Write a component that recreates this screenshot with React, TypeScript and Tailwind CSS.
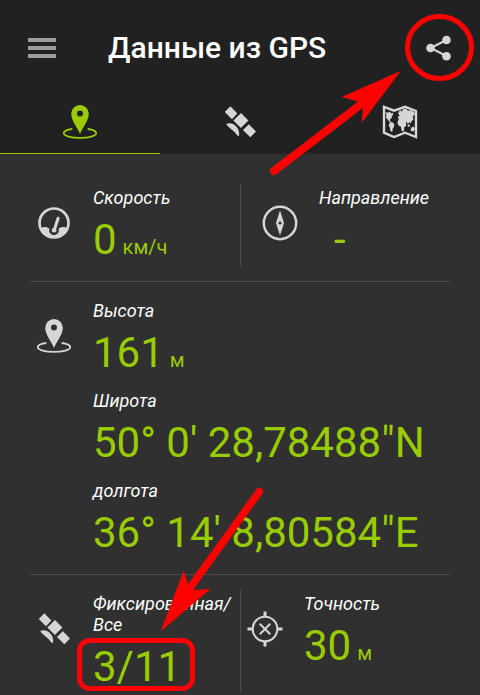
import React, { useState } from 'react';
import clsx from 'clsx';

interface IconProps {
  className?: string;
}

const PinIcon: React.FC<IconProps> = ({ className }) => (
  <svg viewBox="0 0 36 36" className={clsx('w-9 h-9 shrink-0', className)} fill="currentColor" aria-hidden="true">
    <path
      fillRule="evenodd"
      d="M18 1a8.8 8.8 0 0 0-8.8 8.8C9.2 16.500 15 23 18 30c3-7 8.800-13.500 8.800-20.200A8.800 8.800 0 0 0 18 1zm0 5.500a3 3 0 1 1 0 6 3 3 0 0 1 0-6z"
    />
    <path
      d="M10.300 25C4.600 25.800 1.800 27.300 1.800 29.200c0 2.600 7.200 4.700 16.200 4.700s16.200-2.100 16.200-4.700c0-1.900-2.800-3.400-8.500-4.200"
      fill="none"
      stroke="currentColor"
      strokeWidth="1.800"
    />
  </svg>
);

const SatelliteIcon: React.FC<IconProps> = ({ className }) => (
  <svg viewBox="0 0 36 36" className={clsx('w-9 h-9 shrink-0', className)} fill="currentColor" aria-hidden="true">
    <path d="M8.300 2.300 15.300 9.400 10 15.200 2.800 8z" />
    <path d="M19 9.100 26.400 16.600 18.900 23.900 11.400 16.500z" />
    <path d="M26.900 20.200 34 27.600 28.300 33.200 21 25.900z" />
    <path d="M4.100 20C10.500 16.600 18.800 23.800 17 32L15.300 31.600C13.300 27.600 8.300 25.500 4.100 20z" />
  </svg>
);

const MapIcon: React.FC<IconProps> = ({ className }) => (
  <svg viewBox="0 0 36 36" className={clsx('w-9 h-9 shrink-0', className)} fill="currentColor" aria-hidden="true">
    <path
      d="M2 2.800 12 6.700 23 2.800 34 7v26L23 28.700 12 33 2 28.700z"
      fill="none"
      stroke="currentColor"
      strokeWidth="2.400"
    />
    <path d="M3.500 8 6 8.700l1.500-1L9.500 9.500 11.200 8.500 10.600 11.800 9.600 12.500 9.900 14 8.400 14.800 7.800 16.500 9.500 18.200 7 17.500 5.200 14.800 4 13.500 4.500 11z" />
    <path d="M7.800 18.600 10 18 12.300 20.200 11.900 23.200 10.700 24.500 10.300 28 8.300 27 8 23.700 6.700 21.500z" />
    <path d="M16 9.500 18 6 19.500 7.500 21.500 5 24 4.700 26 6.700 28.500 6.200 32.500 8.200 32.800 11 30.700 12 31.500 15.200 29.600 17.200 28.700 19.500 27.200 18 26 20.500 24.700 17.700 24 18.800 24.300 21.500 22.400 23.200 21.800 27.500 19.800 27 18.800 22.500 16.500 21.500 15.300 18.500 16.800 15.300 15.800 13 17.800 11.500z" />
    <path d="M25.300 21.600 27 20.300 28.300 22 26.300 22.900z" />
    <path d="M29.300 23.500 31.700 22.600 33 24.800 31.500 27.500 28.500 26.700z" />
  </svg>
);

const SpeedIcon: React.FC<IconProps> = ({ className }) => (
  <svg viewBox="0 0 36 36" className={clsx('w-9 h-9 shrink-0', className)} aria-hidden="true">
    <circle cx="18" cy="18" r="14.500" fill="none" stroke="currentColor" strokeWidth="2.700" />
    <path
      d="M4.500 23C8 21.500 11 21.700 13.400 23.600A4.900 4.900 0 1 0 22.600 23.600C25 21.700 28 21.500 31.500 23A14.500 14.500 0 0 1 4.500 23z"
      fill="currentColor"
    />
    <path d="M22.100 13.200 18.200 25.300" fill="none" stroke="currentColor" strokeWidth="3" strokeLinecap="round" />
    <circle cx="18.100" cy="25.300" r="2.300" fill="currentColor" />
  </svg>
);

const CompassIcon: React.FC<IconProps> = ({ className }) => (
  <svg viewBox="0 0 36 36" className={clsx('w-9 h-9 shrink-0', className)} aria-hidden="true">
    <circle cx="18" cy="18" r="16.200" fill="none" stroke="currentColor" strokeWidth="2.500" />
    <path
      fill="currentColor"
      fillRule="evenodd"
      d="M18 5.500 22 18 18 30.500 14 18zM18 16.400a1.600 1.600 0 1 0 0 3.200 1.600 1.600 0 0 0 0-3.200z"
    />
  </svg>
);

const AccuracyIcon: React.FC<IconProps> = ({ className }) => (
  <svg
    viewBox="0 0 36 36"
    className={clsx('w-9 h-9 shrink-0', className)}
    fill="none"
    stroke="currentColor"
    aria-hidden="true"
  >
    <circle cx="18" cy="18" r="12.300" strokeWidth="2" />
    <path d="M18 .5v5M18 30.500v5M.5 18h5M30.500 18h5" strokeWidth="3" />
    <path d="M12.800 12.800 23.200 23.200M23.200 12.800 12.800 23.200" strokeWidth="2" />
  </svg>
);

const ShareIcon: React.FC = () => (
  <svg viewBox="0 0 26 26" className="w-[26px] h-[26px]" fill="currentColor" aria-hidden="true">
    <path d="M20.500 5 4.500 13 20.500 21" fill="none" stroke="currentColor" strokeWidth="2" />
    <circle cx="20.500" cy="5" r="4.300" />
    <circle cx="4.500" cy="13" r="4.300" />
    <circle cx="20.500" cy="21.300" r="4.300" />
  </svg>
);

interface ReadingProps {
  label: string;
  value: string;
  unit?: string;
  indent?: boolean;
}

const Reading: React.FC<ReadingProps> = ({ label, value, unit, indent }) => (
  <div>
    <dt className="text-[18px] leading-[21px] italic text-white">{label}</dt>
    <dd className={clsx('mt-[7px] text-[42px] leading-[49px] text-[#99cc00] whitespace-nowrap', indent && 'pl-[15px]')}>
      {value}
      {unit && <span className="ml-[6px] text-[20px] leading-none">{unit}</span>}
    </dd>
  </div>
);

interface BlockProps {
  icon: React.ReactNode;
  className?: string;
  children: React.ReactNode;
}

const Block: React.FC<BlockProps> = ({ icon, className, children }) => (
  <div className={clsx('flex', className)}>
    <div className="w-12 mt-[18px] mr-[15px] shrink-0 flex justify-center items-start text-[#d6d6d6]">{icon}</div>
    <dl className="flex-1 min-w-0 flex flex-col gap-[13px]">{children}</dl>
  </div>
);

const tabs = [
  { id: 'position', label: 'Позиция', Icon: PinIcon },
  { id: 'satellites', label: 'Спутники', Icon: SatelliteIcon },
  { id: 'map', label: 'Карта', Icon: MapIcon },
];

// Red marks over the screen: share button and fixed satellites
const Annotations: React.FC = () => (
  <svg
    width="480"
    height="695"
    viewBox="0 0 480 695"
    className="absolute top-0 left-0 pointer-events-none"
    fill="none"
    stroke="#ff0000"
    aria-hidden="true"
  >
    <ellipse cx="439.500" cy="47.500" rx="32" ry="31" strokeWidth="5" />
    <path d="M274 171 364 102" strokeWidth="8" strokeLinecap="round" />
    <path d="M401 70.700 341.700 97 358 101.500 363 107 361.700 122.700z" fill="#ff0000" stroke="none" />
    <path d="M259.300 491.500 187 592" strokeWidth="7.500" strokeLinecap="round" />
    <path d="M160.700 631.300 183.700 570.700 188.500 586 195 590 210.700 588.700z" fill="#ff0000" stroke="none" />
    <rect x="79.500" y="640.500" width="113" height="48" rx="10" strokeWidth="5" />
  </svg>
);

const App: React.FC = () => {
  const [activeTab, setActiveTab] = useState('position');

  return (
    <div className="relative min-h-screen bg-[#303030] font-['Roboto',sans-serif] overflow-x-hidden">
      <header className="bg-[#212121]">
        <div className="h-24 px-7 flex items-center">
          <button type="button" aria-label="Меню" className="w-7 h-5 flex flex-col justify-between">
            <span className="block w-full h-1 bg-[#9c9c9c]" />
            <span className="block w-full h-1 bg-[#9c9c9c]" />
            <span className="block w-full h-1 bg-[#9c9c9c]" />
          </button>
          <h1 className="ml-13 flex-1 text-[30px] leading-9 font-medium text-white whitespace-nowrap">
            Данные из GPS
          </h1>
          <button type="button" aria-label="Поделиться" className="text-[#d6d6d6]">
            <ShareIcon />
          </button>
        </div>
        <nav className="grid grid-cols-3">
          {tabs.map(({ id, label, Icon }) => (
            <button
              key={id}
              type="button"
              aria-label={label}
              onClick={() => setActiveTab(id)}
              className={clsx(
                'pt-2 pb-[13px] flex justify-center border-b',
                activeTab === id ? 'border-[#99cc00] text-[#99cc00]' : 'border-[#212121] text-[#d6d6d6]'
              )}
            >
              <Icon />
            </button>
          ))}
        </nav>
      </header>

      <main className="px-[30px]">
        <section className="pt-[30px] pb-[15px] grid grid-cols-2 border-b border-[#4d4d4d]">
          <Block icon={<SpeedIcon />} className="pt-[3px] pb-0.5">
            <Reading label="Скорость" value="0" unit="км/ч" />
          </Block>
          <Block icon={<CompassIcon />} className="pt-[3px] pb-0.5 pl-[15px] border-l border-[#4d4d4d]">
            <Reading label="Направление" value="-" indent />
          </Block>
        </section>

        <section className="pt-[18px] pb-[17px] border-b border-[#4d4d4d]">
          <Block icon={<PinIcon />}>
            <Reading label="Высота" value="161" unit="м" />
            <Reading label="Широта" value={'50° 0\' 28,78488"N'} />
            <Reading label="долгота" value={'36° 14\' 8,80584"E'} />
          </Block>
        </section>

        <section className="pt-[15px] pb-0.5 grid grid-cols-2">
          <Block icon={<SatelliteIcon />} className="pt-[3px]">
            <Reading label="Фиксированная/ Все" value="3/11" />
          </Block>
          <Block icon={<AccuracyIcon />} className="pt-[3px] border-l border-[#4d4d4d]">
            <Reading label="Точность" value="30" unit="м" />
          </Block>
        </section>
      </main>

      <Annotations />
    </div>
  );
};

export default App;
